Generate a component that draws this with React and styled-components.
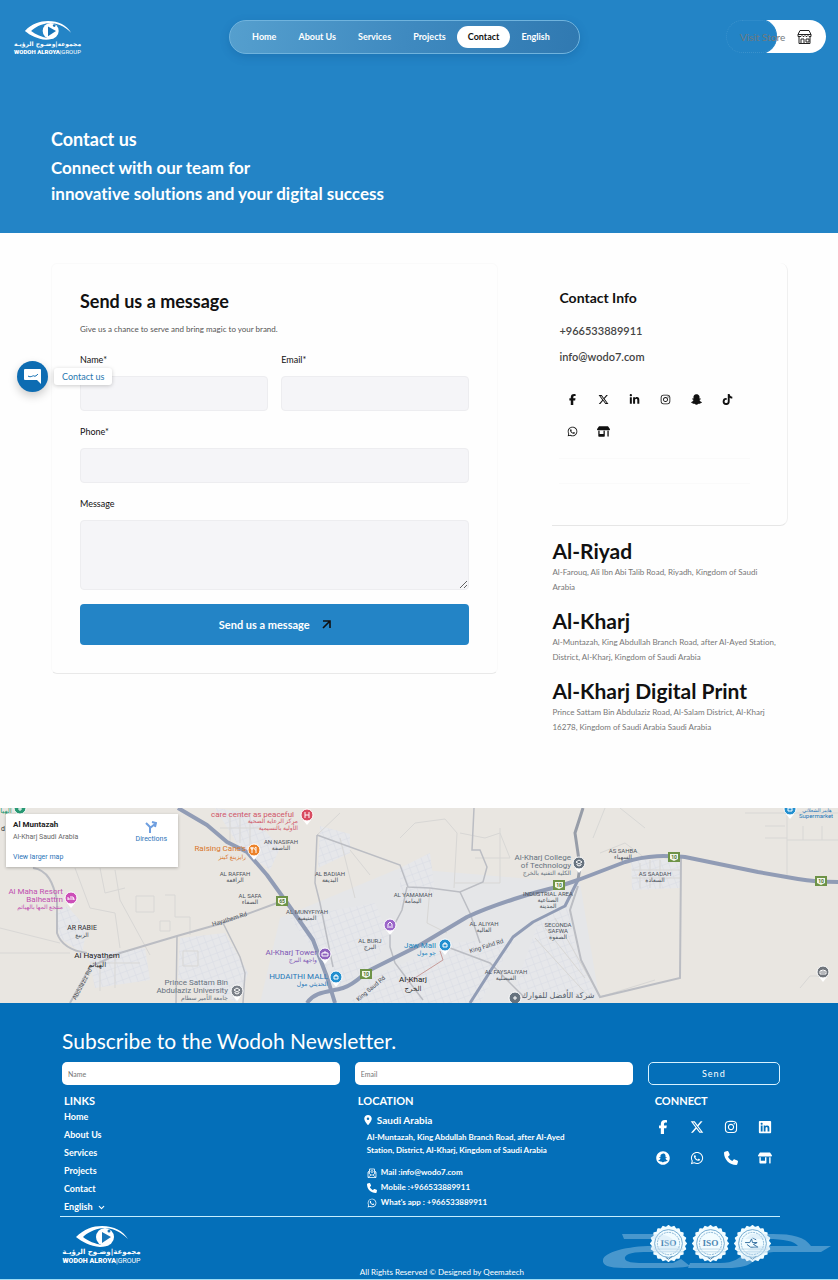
import { styled, createGlobalStyle } from "styled-components";
import { FaFacebookF, FaXTwitter, FaLinkedinIn, FaLinkedin, FaInstagram, FaTiktok, FaWhatsapp, FaShop, FaPhone, FaLocationDot } from "react-icons/fa6";
import { FaSnapchat, FaSnapchatGhost } from "react-icons/fa";
import { FiChevronDown } from "react-icons/fi";

const GlobalStyle = createGlobalStyle`
    *, *::before, *::after { box-sizing: border-box; }
    body {
        margin: 0;
        background: #fefefe;
        color: #111;
        font-family: Lato, "DejaVu Sans", sans-serif;
        font-variant-ligatures: none;
    }
    h1, h2, h3, p, ul { margin: 0; padding: 0; }
    ul { list-style: none; }
    a { color: inherit; text-decoration: none; }
    input, textarea, button { font-family: inherit; }
`;

const Page = styled.div`
    position: relative;
`;

const Hero = styled.header`
    background: #2384c6;
    color: #fff;
    padding: 20px 12px 26px;
`;

const TopBar = styled.div`
    display: flex;
    justify-content: space-between;
    align-items: flex-start;
`;

const LogoLink = styled.a`
    display: flex;
    flex-direction: column;
    align-items: center;
    width: ${({ $large }) => ($large ? 79 : 71)}px;
    white-space: nowrap;
    color: #fff;
    svg {
        width: ${({ $large }) => ($large ? 54 : 48)}px;
        height: ${({ $large }) => ($large ? 22 : 20)}px;
    }
`;

const LogoArabic = styled.span`
    font: bold ${({ $large }) => ($large ? "7px/10px" : "6px/8px")} "DejaVu Sans", sans-serif;
`;

const LogoLatin = styled.span`
    font: 900 ${({ $large }) => ($large ? "7px/8px" : "6px/7px")} Roboto, sans-serif;
    span { font-weight: 400; }
`;

const Nav = styled.nav`
    display: flex;
    align-items: center;
    height: 34px;
    padding: 0 18px 0 11px;
    border: 1px solid #70b3dd;
    border-radius: 17px;
    background: linear-gradient(100deg, #559fce, #3f8ac0 50%, #3079b1);
    box-shadow: 0 3px 8px rgba(10, 70, 130, .25);
`;

const NavLink = styled.a`
    padding: 0 11px;
    border-radius: 11px;
    font-size: 9px;
    line-height: 22px;
    font-weight: 700;
    background: ${({ $active }) => ($active ? "#fff" : "none")};
    color: ${({ $active }) => ($active ? "#111" : "#fff")};
`;

const StoreLink = styled.a`
    display: flex;
    align-items: center;
    justify-content: space-between;
    position: relative;
    width: 100px;
    height: 33px;
    padding: 0 14px;
    border-radius: 17px;
    background: #fff;
    color: #707a80;
    font-size: 10px;
    &::before {
        content: '';
        position: absolute;
        inset: -1px 49px -1px -1px;
        border-radius: 0 17px 17px 0;
        background: #2384c6;
    }
    &::after {
        content: '';
        position: absolute;
        inset: 0 49px 0 0;
        border: 1px dotted #3b92cd;
        border-radius: 17px;
    }
    span, svg { position: relative; z-index: 1; }
    svg { color: #222; }
`;

const HeroText = styled.div`
    padding: 71px 39px 0;
    font-size: 17px;
    line-height: 26px;
    font-weight: 700;
    h1 {
        font-size: 18px;
        font-weight: 700;
        margin-bottom: 3px;
    }
`;

const Main = styled.main`
    display: grid;
    grid-template-columns: minmax(0, 19fr) minmax(0, 10fr);
    gap: 54px;
    align-items: start;
    padding: 30px 50px 73px 51px;
`;

const FormCard = styled.form`
    display: flex;
    flex-direction: column;
    padding: 25px 28px 28px;
    border: 1px solid #fafafa;
    border-bottom-color: #e9e9e9;
    border-radius: 6px;
    h2 {
        font-size: 18px;
        line-height: 24px;
        font-weight: 700;
    }
    > p {
        margin: 10px 0 19px;
        font-size: 8px;
        line-height: 12px;
        color: #555;
    }
`;

const FieldRow = styled.div`
    display: grid;
    grid-template-columns: ${({ $columns = 1 }) => `repeat(${$columns}, minmax(0, 1fr))`};
    gap: 13px;
    margin-bottom: ${({ $last }) => ($last ? 14 : 15)}px;
`;

const Field = styled.label`
    display: flex;
    flex-direction: column;
    gap: 10px;
    font-size: 9px;
    line-height: 12px;
    input, textarea {
        display: block;
        width: 100%;
        height: 35px;
        padding: 8px;
        border: 1px solid #ededf0;
        border-radius: 4px;
        background: #f5f5f8;
    }
    textarea { height: 70px; }
`;

const SubmitButton = styled.button`
    display: flex;
    align-items: center;
    justify-content: center;
    gap: 12px;
    height: 41px;
    border: 0;
    border-radius: 4px;
    background: #2384c6;
    color: #fff;
    font-size: 11px;
    font-weight: 700;
    svg { color: #111; }
`;

const InfoCard = styled.section`
    min-height: 263px;
    padding: 26px 7px;
    border-right: 1px solid #f0f0f0;
    border-bottom: 1px solid #e6e6e6;
    border-radius: 0 8px 8px 0;
    h2 {
        font-size: 14px;
        line-height: 18px;
        font-weight: 700;
        margin-bottom: 11px;
    }
`;

const InfoLine = styled.a`
    display: block;
    font-size: 11px;
    line-height: 26px;
    font-weight: 600;
    color: #444;
`;

const InfoIcons = styled.div`
    display: grid;
    grid-template-columns: repeat(6, 26px);
    gap: 6px 5px;
    margin: 16px 0 14px;
    a {
        display: grid;
        place-items: center;
        height: 26px;
    }
`;

const InfoDivider = styled.div`
    height: 26px;
    margin-right: 30px;
    border: 1px solid #fafafa;
    border-width: 1px 0;
`;

const Branch = styled.article`
    margin-top: ${({ $first }) => ($first ? 13 : 14)}px;
    h2 {
        font-size: 21px;
        line-height: 24px;
        font-weight: 700;
        margin-bottom: 2px;
    }
    p {
        padding-right: 10px;
        font-size: 8px;
        line-height: 15px;
        color: #777;
    }
`;

const ChatWidget = styled.div`
    position: absolute;
    top: 361px;
    left: 17px;
    display: flex;
    align-items: center;
    gap: 6px;
    button {
        display: grid;
        place-items: center;
        width: 31px;
        height: 31px;
        padding: 0;
        border: 0;
        border-radius: 50%;
        background: #0d6cb2;
        box-shadow: 0 4px 10px rgba(0, 0, 0, .2);
    }
    span {
        padding: 0 8px;
        border-radius: 3px;
        background: #fff;
        box-shadow: 0 1px 4px rgba(0, 0, 0, .2);
        font-size: 9px;
        line-height: 17px;
        color: #2878b0;
    }
`;

const MapBox = styled.section`
    position: relative;
    height: 195px;
    overflow: hidden;
    > svg {
        display: block;
        width: 100%;
        height: 100%;
    }
    text { font-family: Roboto, "DejaVu Sans", sans-serif; }
`;

const MapCard = styled.div`
    position: absolute;
    top: 6px;
    left: 6px;
    display: flex;
    justify-content: space-between;
    width: 172px;
    height: 53px;
    padding: 5px 11px 4px 7px;
    background: #fff;
    box-shadow: 0 1px 3px rgba(0, 0, 0, .25);
    font: 7px/12px Roboto, sans-serif;
    color: #666;
    h3 {
        font-size: 8px;
        line-height: 12px;
        font-weight: 700;
        color: #222;
    }
    a { color: #2a74b8; }
    > div a {
        display: block;
        margin-top: 8px;
    }
    > a {
        display: flex;
        flex-direction: column;
        align-items: center;
        padding-top: 2px;
    }
`;

const Footer = styled.footer`
    padding: 26px 58px 0 62px;
    border-bottom: 1px solid #9bdcf5;
    background: #046fb9;
    color: #fff;
    > h2 {
        font-size: 21px;
        line-height: 24px;
        font-weight: 400;
        margin-bottom: 9px;
    }
`;

const FooterGrid = styled.div`
    display: grid;
    grid-template-columns: minmax(0, 21fr) minmax(0, 21fr) minmax(0, 10fr);
    gap: 15px;
`;

const Newsletter = styled(FooterGrid).attrs({ as: "form" })`
    input, button {
        min-width: 0;
        height: 23px;
        border-radius: 5px;
        font-size: 7px;
    }
    input {
        padding: 0 6px;
        border: 0;
        background: #fff;
    }
    button {
        border: 1px solid #d8f2ff;
        background: none;
        color: #fff;
        font-size: 9px;
        letter-spacing: 1px;
    }
`;

const FooterColumn = styled.section`
    padding-left: ${({ $indent }) => $indent}px;
    h3 {
        margin-top: 9px;
        font-size: 11px;
        line-height: 14px;
        font-weight: 700;
    }
`;

const FooterLinks = styled.ul`
    font-size: 9px;
    line-height: 18px;
    font-weight: 700;
    a {
        display: inline-flex;
        align-items: center;
        gap: 5px;
    }
`;

const Place = styled.p`
    display: flex;
    align-items: center;
    gap: 4px;
    padding: 4px 0 3px 5px;
    font-size: 10px;
    line-height: 16px;
    font-weight: 700;
`;

const PlaceAddress = styled.p`
    padding: 0 50px 8px 9px;
    font-size: 8px;
    line-height: 13px;
    font-weight: 700;
`;

const ContactLine = styled.a`
    display: flex;
    align-items: center;
    gap: 4px;
    padding-left: 9px;
    font-size: 8px;
    line-height: 15px;
    font-weight: 700;
`;

const SocialGrid = styled.div`
    display: grid;
    grid-template-columns: repeat(4, 16px);
    gap: 15px 18px;
    margin-top: 11px;
    font-size: 14px;
    a {
        display: grid;
        place-items: center;
        height: 16px;
    }
`;

const FooterBottom = styled(FooterGrid)`
    position: relative;
    height: 63px;
    margin-left: -2px;
    padding: 8px 0 0 2px;
    border-top: 1px solid #c6eeff;
`;

const Copyright = styled.p`
    align-self: end;
    padding-left: 5px;
    font-size: 8px;
    line-height: 14px;
`;

const Badges = styled.div`
    display: flex;
    gap: 5px;
    padding-left: 2px;
    svg {
        flex: none;
        width: 37px;
        height: 37px;
    }
`;

const Watermark = styled.svg`
    position: absolute;
    right: -52px;
    top: 15px;
    width: 230px;
    height: 38px;
    pointer-events: none;
`;

function Logo({ large }) {
    return (
        <LogoLink href="#" $large={large} aria-label="Wodoh Alroya Group">
            <svg viewBox="0 0 54 22">
                <path d="M1 12C9 4 18 1 27 1c12 0 21 5 26 13C45 6 37 3 28 3 19 4 12 8 8 12c5 4 12 7 20 8 3 0 6 0 8-1-3 2-7 3-11 3C15 21 7 17 1 12Z" fill="#fff" />
                <circle cx="30" cy="12" r="9" fill="#fff" />
                <path d="m27 7 9 5-9 6Z" fill="#1975b8" />
                <circle cx="34" cy="6" r="1.5" fill="#1975b8" />
            </svg>
            <LogoArabic $large={large} dir="rtl">مجموعة|وضـوح الرؤيـة</LogoArabic>
            <LogoLatin $large={large}>WODOH ALROYA<span>|GROUP</span></LogoLatin>
        </LogoLink>
    )
}

function StoreIcon() {
    return (
        <svg width="15" height="14" viewBox="0 0 15 14" fill="none" stroke="currentColor">
            <path d="M3 .5h9l2 4v2h-2l-1-1-1 1H9l-1-1-1 1H6l-1-1-1 1H1v-2ZM1 4.5h13M2 7v6.5h11V7M4 13V9h3v4M9 9h3v3H9Z" />
        </svg>
    )
}

function ArrowIcon() {
    return (
        <svg width="9" height="9" viewBox="0 0 9 9" fill="none" stroke="currentColor" strokeWidth="1.6">
            <path d="M1 1h7v7M8 1 1 8" />
        </svg>
    )
}

function MailIcon() {
    return (
        <svg width="10" height="10" viewBox="0 0 20 20" fill="none" stroke="currentColor" strokeWidth="1.6">
            <path d="M2 8v11h16V8M2 8l3-3M18 8l-3-3M2 9l6 5h4l6-5M2 19l6-5M18 19l-6-5M5 11V2h10v9" />
            <circle cx="10" cy="7" r="2" />
        </svg>
    )
}

const gear = Array.from({ length: 40 }, (_, i) => {
    const r = i % 2 ? 17 : 19;
    const a = (i * Math.PI) / 20;
    return `${(20 + r * Math.cos(a)).toFixed(1)},${(20 + r * Math.sin(a)).toFixed(1)}`;
}).join(" ");

function Badge({ label }) {
    return (
        <svg viewBox="0 0 40 40">
            <polygon points={gear} fill="#f2fcff" stroke="#f2fcff" strokeWidth="2" strokeLinejoin="round" />
            <circle cx="20" cy="20" r="15" fill="none" stroke="#6aa4cc" />
            <circle cx="20" cy="20" r="12" fill="none" stroke="#7bacd0" strokeDasharray="2 1" />
            <path d="M4 26h32M4 29h32" stroke="#bcd7e8" />
            <path d="m17 35 3 2 4-3" fill="none" stroke="#457fa9" />
            {label
                ? <text x="20" y="23" textAnchor="middle" fontFamily="Liberation Serif, serif" fontWeight="700" fontSize="10" fill="#4d86b2">{label}</text>
                : <path d="M12 19h5l2-4 1 4h5l-4 2 5 3h-8l-4-3M20 14l4 2" fill="none" stroke="#28669a" />}
        </svg>
    )
}

const districts = [
    [281, 36, "AN NASIFAH", "الناصفة"],
    [235, 68, "AL RAFFAH", "الرافعة"],
    [250, 90, "AL SAFA", "الصفاء"],
    [330, 68, "AL BADIAH", "البديعة"],
    [307, 106, "AL MUNYFIYAH", "المنيفية"],
    [413, 89, "AL YAMAMAH", "اليمامة"],
    [370, 135, "AL BURJ", "البرج"],
    [484, 118, "AL ALIYAH", "العالية"],
    [506, 166, "AL FAYSALIYAH", "الفيصلية"],
    [623, 45, "AS SAHBA", "السهباء"],
    [655, 68, "AS SAADAH", "السعادة"],
    [548, 88, "INDUSTRIAL AREA", "الصناعية"],
];

const places = [
    [294, 9, "care center as peaceful", "#d05668"],
    [246, 43, "Raising Cane's", "#d9762b"],
    [63, 86, "Al Maha Resort", "#c04fb0"],
    [63, 94, "Balheattrn", "#c04fb0"],
    [317, 147, "Al-Kharj Tower", "#8059b5"],
    [328, 171, "HUDAITHI MALL", "#2377b8"],
    [436, 140, "Jaw Mall", "#2386c0"],
    [571, 52, "Al-Kharj College", "#66727e"],
    [571, 60, "of Technology", "#66727e"],
    [228, 177, "Prince Sattam Bin", "#66727e"],
    [228, 185, "Abdulaziz University", "#66727e"],
];

const arabicPlaces = [
    [298, 15, "مركز الرعاية الصحية", "#d05668"],
    [298, 22, "الأولية بالنسيمية", "#d05668"],
    [246, 51, "رايزينغ كينز", "#d9762b"],
    [63, 101, "منتجع المها بالهياثم", "#c04fb0"],
    [317, 154, "واجهة البرج", "#8059b5"],
    [328, 178, "الحديثي مول", "#2377b8"],
    [436, 147, "جو مول", "#2386c0"],
    [571, 67, "الكلية التقنية بالخرج", "#66727e"],
    [228, 192, "جامعة الأمير سطام", "#66727e"],
];

const pins = [
    [307, 7, "#d84b60", "M-2-3v6M2-3v6M-2 0h4"],
    [254, 42, "#ec8129", "M-2-3v6M-3-3v2h2v-2M2 3v-6c-2 1-2 3 0 3"],
    [71, 90, "#cc4fb8", "M-3 2v-3M-3 1h6v1M-1-1h3l1 2"],
    [325, 146, "#8d62bd", "M-3-1h6v3h-6ZM-1-1v-1h2v1"],
    [336, 169, "#228fcf", "M-2-1h4v3h-4ZM-1-1v-1h2v1"],
    [445, 137, "#228fcf", "M-2-1h4v3h-4ZM-1-1v-1h2v1"],
    [390, 117, "#9b66c9", "M-2 3v-4l2-2 2 2v4M0 3v-2"],
    [579, 55, "#66727e", "M-3-1 0-3l3 2-3 2ZM-2 1v1l2 1 2-1v-1"],
    [237, 183, "#7a8088", "M-3-1 0-3l3 2-3 2ZM-2 1v1l2 1 2-1v-1"],
    [515, 190, "#66727e", "M-1-1h2v2h-2Z"],
    [823, 164, "#70757c", "M-3 2v-3l3-1 3 1v3ZM-2 0h4"],
    [790, 1, "#228fcf", "M-2-1h4v3h-4Z"],
    [20, 0, "#289873", "M-2 1h4M0-2v5"],
];

const shields = [[282, 93, "65"], [366, 166, "10"], [559, 77, "10"], [674, 49, "10"], [821, 73, "10"]];

const urban = [
    "M215 0 250 5 280 40 270 62 240 40Z",
    "M55 105 67 98 87 120 82 145 60 130Z",
    "M88 146 145 140 150 172 95 180Z",
    "M180 130 225 125 248 165 238 195 178 170Z",
    "M320 18 350 26 350 45 318 60Z",
    "M290 110 375 95 390 130 370 160 340 178Z",
    "M400 60 430 45 435 85 400 100Z",
    "M370 170 450 135 515 130 480 195H350Z",
    "M540 110 568 100 578 150 598 190 515 180Z",
    "M631 52 680 51 680 80 632 82Z",
];

function TownMap() {
    return (
        <svg viewBox="0 0 838 195" preserveAspectRatio="xMidYMid slice" role="img" aria-label="Map of Al-Kharj">
            <defs>
                <pattern id="blocks" width="7" height="7" patternUnits="userSpaceOnUse" patternTransform="rotate(-20)">
                    <rect width="7" height="7" fill="#e6e7ea" />
                    <path d="M0 0h7M0 0v7" stroke="#d8dce4" />
                </pattern>
            </defs>
            <rect width="838" height="195" fill="#e9e6e1" />
            <path d="M280 110 400 60 580 75 600 195H260Z" fill="#e5e6e8" />
            {urban.map(d => <path key={d} d={d} fill="url(#blocks)" />)}
            <g fill="none" stroke="#d8d7d5" strokeWidth="1">
                <path d="M0 120 60 135M0 145h70M75 60l15 40 25 5 5 35M100 60l5 25 20-5M136 88h18v16h-18ZM165 87h10v22h15v18M115 62l5 30 30 55M160 113h10v10h-10Z" />
                <path d="M317 27 340 5M340 30l15 60M350 42l20 25M400 30l15-15 30-4 12 14-3 55M460 25l25 5 15-5 10 25h-35M500 20v55h-45M430 80l-3 35 20 10M605 0l-12 30M620 0l25 20M600 45l25-10 20 15M640 55v25M650 52v28M660 52v28M632 62h48M632 70h48M765 18h20M765 30h22M780 5h58M787 32h51M787 0v67M745 5h35M803 18v14M822 18v14M800 180l10-12h14" />
                <path d="M183 143h15v15h-15ZM90 155h50M100 148v35M115 145v35M545 120l40 50M555 110l40 70M535 130l55 60M600 189l55-17M220 20h40M230 5v30M240 5v30M250 5v40" />
            </g>
            <g fill="none" stroke="#bbbdc3" strokeWidth="2">
                <path d="M120 145 177 128 223 115 277 95M70 195 90 159 120 145M33 60c15 2 20 15 24 32v33c4 12 15 18 30 20" />
                <path d="M317 27 400 57 408 79 430 80 460 84 483 74 487 59 480 42H472L474 0M317 27 315 75 320 95 333 159" strokeWidth="1.5" />
                <path d="M407 79 402 102 390 125V139L395 155 423 192M460 84 470 105 480 135M450 140l40 15 35 35M223 115l17 34 5 16-2 30M177 128l-1 67" strokeWidth="1.5" />
                <path d="M681 50 680 170 600 189 581 152 570 102 578 78" />
                <path d="M583 0 575 25 580 59 578 72" stroke="#979da8" strokeWidth="3" />
            </g>
            <path d="M440 143 443 152 407 175" fill="none" stroke="#c79c99" />
            <g fill="none" stroke="#919cb5" strokeWidth="4" strokeLinejoin="round">
                <path d="M178 0 207 17 227 34 247 44 267 67 290 99 313 132 327 169 335 195" />
                <path d="M307 195C315 183 330 184 343 180S365 164 370 162L420 137 467 109C495 96 535 84 557 79L578 72 625 54C650 46 670 48 685 49L758 64 798 71C815 74 825 74 838 74" />
                <path d="M470 195 493 159 513 129 533 114 565 98 578 72" strokeWidth="3" />
            </g>
            <g fontSize="6" fill="#4c535c" textAnchor="middle">
                {districts.map(([x, y, name, arabic]) => (
                    <g key={name}>
                        <text x={x} y={y}>{name}</text>
                        <text x={x} y={y + 6}>{arabic}</text>
                    </g>
                ))}
                <text x="548" y="100">المدينة</text>
                <text x="558" y="119">SECONDA</text>
                <text x="558" y="125">SAFWA</text>
                <text x="558" y="131">الصفوة</text>
                <text x="82" y="122" fontSize="7" fill="#333">AR RABIE</text>
                <text x="82" y="129">الربيع</text>
                <text x="97" y="150" fontSize="8" fill="#222">Al Hayathem</text>
                <text x="97" y="159" fontSize="7" fill="#333">الهياثم</text>
                <text x="413" y="174" fontSize="8" fill="#222">Al-Kharj</text>
                <text x="413" y="183" fontSize="7" fill="#333">الخرج</text>
                <text x="816" y="10" fill="#2377b8">Supermarket</text>
                <text x="817" y="4" fontSize="5" fill="#2377b8">هايبر الشعلاني</text>
                <text x="6" y="5" fontSize="7" fill="#289873">الهيا</text>
                <text x="3" y="23" fontSize="7" fill="#333">d</text>
                <text x="558" y="190" fontSize="8" fill="#55606c">شركة الأفضل للفوارك</text>
            </g>
            <g fontSize="6" fill="#4a4f57" textAnchor="middle">
                <text transform="translate(230 113) rotate(-17)">Hayathem Rd</text>
                <text transform="translate(84 177) rotate(-62)">Abdulaziz Rd</text>
                <text transform="translate(372 182) rotate(-40)">King Saud Rd</text>
                <text transform="translate(487 140) rotate(-17)">King Fahd Rd</text>
            </g>
            {places.map(([x, y, name, color]) => (
                <text key={name} x={x} y={y} fontSize="8" fill={color} textAnchor="end">{name}</text>
            ))}
            {arabicPlaces.map(([x, y, name, color]) => (
                <text key={name} x={x} y={y} fontSize="6" fill={color} textAnchor="end">{name}</text>
            ))}
            {pins.map(([x, y, color, icon]) => (
                <g key={`${x}-${y}`} transform={`translate(${x} ${y})`}>
                    <path d="M-4 5h8l-4 5Z" fill="#fff" />
                    <circle r="6" fill={color} stroke="#fff" />
                    <path d={icon} fill="none" stroke="#fff" />
                </g>
            ))}
            {shields.map(([x, y, number]) => (
                <g key={x}>
                    <rect x={x - 6} y={y - 5} width="12" height="10" fill="#6e9347" />
                    <path d={`M${x - 4} ${y - 3}h8v5l-4 2-4-2Z`} fill="#f2f6ea" />
                    <text x={x} y={y + 2} textAnchor="middle" fontSize="5" fontWeight="700" fill="#4e7230">{number}</text>
                </g>
            ))}
        </svg>
    )
}

const navItems = ["Home", "About Us", "Services", "Projects", "Contact", "English"];

const infoIcons = [
    ["Facebook", FaFacebookF], ["X", FaXTwitter], ["LinkedIn", FaLinkedinIn], ["Instagram", FaInstagram],
    ["Snapchat", FaSnapchatGhost], ["TikTok", FaTiktok], ["WhatsApp", FaWhatsapp], ["Store", FaShop],
];

const footerIcons = [
    ["Facebook", FaFacebookF], ["X", FaXTwitter], ["Instagram", FaInstagram], ["LinkedIn", FaLinkedin],
    ["Snapchat", FaSnapchat], ["WhatsApp", FaWhatsapp], ["Phone", FaPhone], ["Store", FaShop],
];

const branches = [
    { name: "Al-Riyad", address: "Al-Farouq, Ali Ibn Abi Talib Road, Riyadh, Kingdom of Saudi Arabia" },
    { name: "Al-Kharj", address: "Al-Muntazah, King Abdullah Branch Road, after Al-Ayed Station, District, Al-Kharj, Kingdom of Saudi Arabia" },
    { name: "Al-Kharj Digital Print", address: "Prince Sattam Bin Abdulaziz Road, Al-Salam District, Al-Kharj 16278, Kingdom of Saudi Arabia Saudi Arabia" },
];

export default function App() {
    const stop = e => e.preventDefault();

    return (
        <Page>
            <GlobalStyle />
            <Hero>
                <TopBar>
                    <Logo />
                    <Nav>
                        {navItems.map(item => (
                            <NavLink key={item} href="#" $active={item === "Contact"}>{item}</NavLink>
                        ))}
                    </Nav>
                    <StoreLink href="#">
                        <span>Visit Store</span>
                        <StoreIcon />
                    </StoreLink>
                </TopBar>
                <HeroText>
                    <h1>Contact us</h1>
                    <p>Connect with our team for<br />innovative solutions and your digital success</p>
                </HeroText>
            </Hero>

            <Main>
                <FormCard onSubmit={stop}>
                    <h2>Send us a message</h2>
                    <p>Give us a chance to serve and bring magic to your brand.</p>
                    <FieldRow $columns={2}>
                        <Field>Name*<input type="text" name="name" /></Field>
                        <Field>Email*<input type="email" name="email" /></Field>
                    </FieldRow>
                    <FieldRow>
                        <Field>Phone*<input type="tel" name="phone" /></Field>
                    </FieldRow>
                    <FieldRow $last>
                        <Field>Message<textarea name="message" /></Field>
                    </FieldRow>
                    <SubmitButton type="submit">
                        Send us a message
                        <ArrowIcon />
                    </SubmitButton>
                </FormCard>

                <div>
                    <InfoCard>
                        <h2>Contact Info</h2>
                        <InfoLine href="tel:+966533889911">+966533889911</InfoLine>
                        <InfoLine href="mailto:info@wodo7.com">info@wodo7.com</InfoLine>
                        <InfoIcons>
                            {infoIcons.map(([name, Icon]) => (
                                <a key={name} href="#" aria-label={name}><Icon size={name === "Store" ? 13 : 11} /></a>
                            ))}
                        </InfoIcons>
                        <InfoDivider />
                    </InfoCard>
                    {branches.map((branch, i) => (
                        <Branch key={branch.name} $first={i === 0}>
                            <h2>{branch.name}</h2>
                            <p>{branch.address}</p>
                        </Branch>
                    ))}
                </div>
            </Main>

            <MapBox>
                <TownMap />
                <MapCard>
                    <div>
                        <h3>Al Muntazah</h3>
                        <p>Al-Kharj Saudi Arabia</p>
                        <a href="#">View larger map</a>
                    </div>
                    <a href="#">
                        <svg width="12" height="12" viewBox="0 0 12 12" fill="none" stroke="#6f9fe0" strokeWidth="2">
                            <path d="M1 2l4 4v6M5 7l5-4M7 1l4 1-1 4" />
                        </svg>
                        Directions
                    </a>
                </MapCard>
            </MapBox>

            <Footer>
                <h2>Subscribe to the Wodoh Newsletter.</h2>
                <Newsletter onSubmit={stop}>
                    <input type="text" placeholder="Name" aria-label="Name" />
                    <input type="email" placeholder="Email" aria-label="Email" />
                    <button type="submit">Send</button>
                </Newsletter>
                <FooterGrid>
                    <FooterColumn $indent={2}>
                        <h3>LINKS</h3>
                        <FooterLinks>
                            {navItems.map(item => (
                                <li key={item}>
                                    <a href="#">{item}{item === "English" && <FiChevronDown size={9} strokeWidth={3} />}</a>
                                </li>
                            ))}
                        </FooterLinks>
                    </FooterColumn>
                    <FooterColumn $indent={3}>
                        <h3>LOCATION</h3>
                        <Place><FaLocationDot />Saudi Arabia</Place>
                        <PlaceAddress>Al-Muntazah, King Abdullah Branch Road, after Al-Ayed Station, District, Al-Kharj, Kingdom of Saudi Arabia</PlaceAddress>
                        <ContactLine href="mailto:info@wodo7.com"><MailIcon />Mail :info@wodo7.com</ContactLine>
                        <ContactLine href="tel:+966533889911"><FaPhone size={10} />Mobile :+966533889911</ContactLine>
                        <ContactLine href="#"><FaWhatsapp size={10} />What's app : +966533889911</ContactLine>
                    </FooterColumn>
                    <FooterColumn $indent={7}>
                        <h3>CONNECT</h3>
                        <SocialGrid>
                            {footerIcons.map(([name, Icon]) => (
                                <a key={name} href="#" aria-label={name}><Icon /></a>
                            ))}
                        </SocialGrid>
                    </FooterColumn>
                </FooterGrid>
                <FooterBottom>
                    <Logo large />
                    <Copyright>All Rights Reserved © Designed by <a href="#">Qeematech</a></Copyright>
                    <Badges>
                        <Badge label="ISO" />
                        <Badge label="ISO" />
                        <Badge />
                    </Badges>
                    <Watermark viewBox="0 0 230 38" fill="#c3def0" fillOpacity=".36">
                        <path d="M20 2h32c14 0 20 4 22 12h-9c-3-5-8-7-15-7H22ZM50 14h28v6H42c-14 0-20 3-19 7 1 3 8 4 18 4h30l8-4 9 7c-8 2-20 2-38 2H22C6 36 0 33 1 28 2 20 26 14 50 14Z" />
                        <path d="M88 31h30c14 0 20-5 26-11 6-5 12-7 24-6h28c-4-5-14-7-31-7h-22l6-5h22c20 0 32 3 38 12h20l-10 6h-45c-12 0-15 3-21 8-6 6-14 8-28 8H86Z" />
                    </Watermark>
                </FooterBottom>
            </Footer>

            <ChatWidget>
                <button type="button" aria-label="Open chat">
                    <svg width="19" height="17" viewBox="0 0 19 17" fill="none">
                        <path d="M2 1h15a1 1 0 0 1 1 1v14l-4-4H2a1 1 0 0 1-1-1V2a1 1 0 0 1 1-1Z" fill="#fff" />
                        <path d="M5 8c3 2 5-1 6 0s3-1 4-2" stroke="#0d6cb2" />
                    </svg>
                </button>
                <span>Contact us</span>
            </ChatWidget>
        </Page>
    )
}
